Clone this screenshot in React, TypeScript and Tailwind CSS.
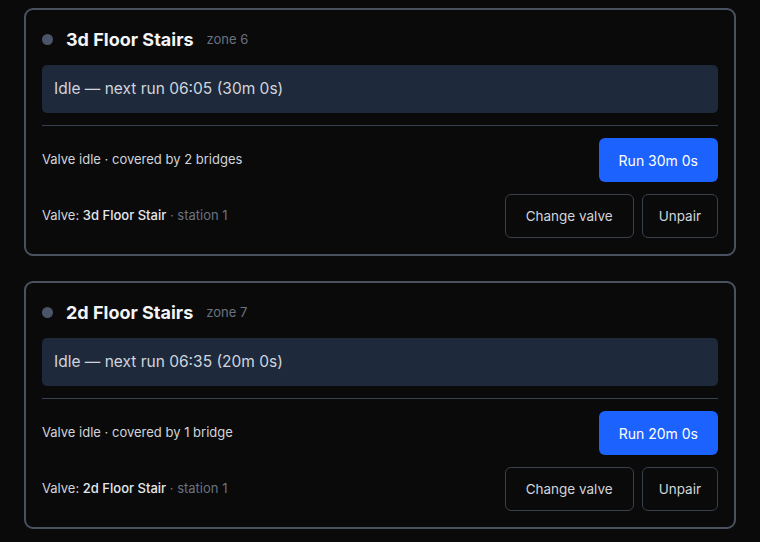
import React from "react";

type Zone = {
  name: string;
  zone: number;
  next: string;
  duration: string;
  bridges: number;
  valve: string;
  station: number;
};

const zones: Zone[] = [
  { name: "3d Floor Stairs", zone: 6, next: "06:05", duration: "30m 0s", bridges: 2, valve: "3d Floor Stair", station: 1 },
  { name: "2d Floor Stairs", zone: 7, next: "06:35", duration: "20m 0s", bridges: 1, valve: "2d Floor Stair", station: 1 },
];

function ZoneCard({ z }: { z: Zone }) {
  return (
    <div className="rounded-[9px] border-2 border-[#4a5260] bg-[#0a0a0b] p-4">
      <div className="flex h-[27px] items-center">
        <span className="h-[11px] w-[11px] rounded-full bg-[#4b5567]" />
        <span className="ml-[13px] text-[18px] font-bold text-[#f3f4f6]">{z.name}</span>
        <span className="ml-[13px] text-[13px] text-[#6b7280]">zone {z.zone}</span>
      </div>
      <div className="mt-3 rounded-[5px] bg-[#1e293b] px-3 py-3 text-[15.5px] leading-6 text-[#d1d5db]">
        Idle — next run {z.next} ({z.duration})
      </div>
      <div className="mt-3 h-px bg-[#374151]" />
      <div className="mt-3 flex items-center justify-between">
        <span className="text-[13px] text-[#d1d5db]">
          Valve idle · covered by {z.bridges} {z.bridges === 1 ? "bridge" : "bridges"}
        </span>
        <button className="h-[44px] rounded-[6px] bg-[#1c62ff] px-5 text-[14px] text-white">
          Run {z.duration}
        </button>
      </div>
      <div className="mt-3 flex items-center justify-between">
        <span className="text-[13px] text-[#d1d5db]">
          Valve: <span className="font-medium text-[#e5e7eb]">{z.valve}</span>
          <span className="text-[#6b7280]"> · station {z.station}</span>
        </span>
        <div className="flex gap-2">
          <button className="h-[44px] rounded-[6px] border border-[#3a404b] px-5 text-[13.5px] text-[#d1d5db]">
            Change valve
          </button>
          <button className="h-[44px] rounded-[6px] border border-[#3a404b] px-4 text-[13.5px] text-[#d1d5db]">
            Unpair
          </button>
        </div>
      </div>
    </div>
  );
}

export default function App() {
  return (
    <div
      className="min-h-[542px] bg-[#0a0a0b] px-6 pt-2"
      style={{ fontFamily: "Inter, 'Noto Sans', sans-serif" }}
    >
      <div className="flex flex-col gap-[25px]">
        {zones.map((z) => (
          <ZoneCard key={z.zone} z={z} />
        ))}
      </div>
    </div>
  );
}
